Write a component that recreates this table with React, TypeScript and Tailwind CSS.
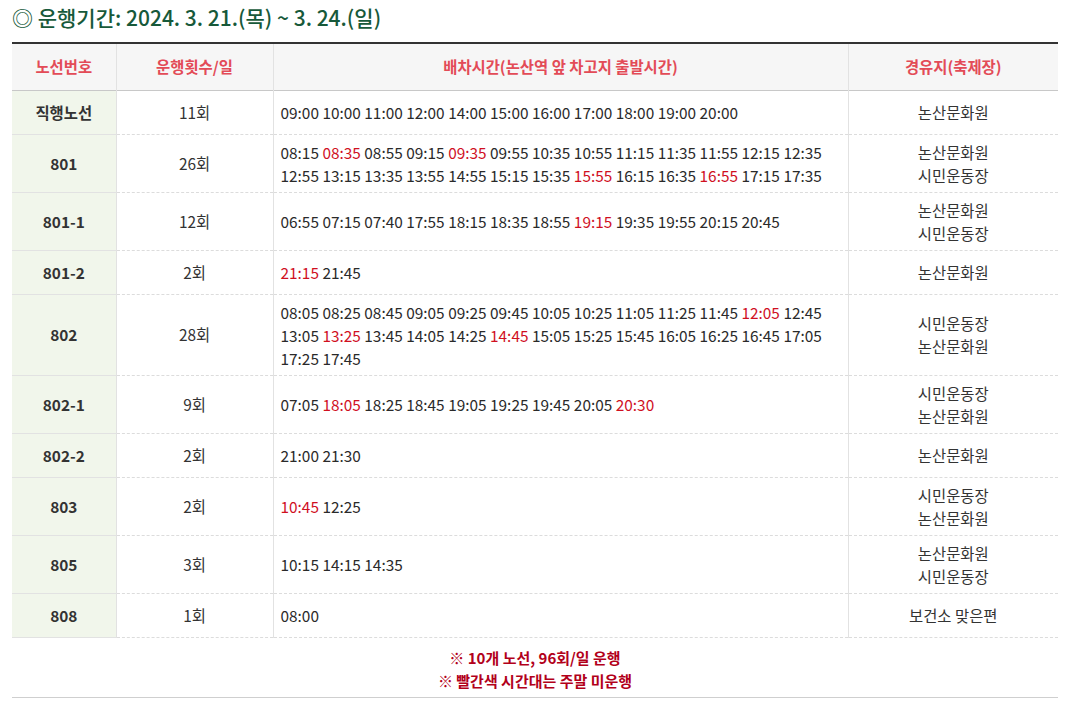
import React from 'react';

type Route = {
    no: string;
    count: string;
    lines: string[][];
    stops: string[];
};

// times prefixed with * are weekday-only (red)
const routes: Route[] = [
    {
        no: '직행노선',
        count: '11회',
        lines: [['09:00', '10:00', '11:00', '12:00', '14:00', '15:00', '16:00', '17:00', '18:00', '19:00', '20:00']],
        stops: ['논산문화원'],
    },
    {
        no: '801',
        count: '26회',
        lines: [
            ['08:15', '*08:35', '08:55', '09:15', '*09:35', '09:55', '10:35', '10:55', '11:15', '11:35', '11:55', '12:15', '12:35'],
            ['12:55', '13:15', '13:35', '13:55', '14:55', '15:15', '15:35', '*15:55', '16:15', '16:35', '*16:55', '17:15', '17:35'],
        ],
        stops: ['논산문화원', '시민운동장'],
    },
    {
        no: '801-1',
        count: '12회',
        lines: [['06:55', '07:15', '07:40', '17:55', '18:15', '18:35', '18:55', '*19:15', '19:35', '19:55', '20:15', '20:45']],
        stops: ['논산문화원', '시민운동장'],
    },
    {
        no: '801-2',
        count: '2회',
        lines: [['*21:15', '21:45']],
        stops: ['논산문화원'],
    },
    {
        no: '802',
        count: '28회',
        lines: [
            ['08:05', '08:25', '08:45', '09:05', '09:25', '09:45', '10:05', '10:25', '11:05', '11:25', '11:45', '*12:05', '12:45'],
            ['13:05', '*13:25', '13:45', '14:05', '14:25', '*14:45', '15:05', '15:25', '15:45', '16:05', '16:25', '16:45', '17:05'],
            ['17:25', '17:45'],
        ],
        stops: ['시민운동장', '논산문화원'],
    },
    {
        no: '802-1',
        count: '9회',
        lines: [['07:05', '*18:05', '18:25', '18:45', '19:05', '19:25', '19:45', '20:05', '*20:30']],
        stops: ['시민운동장', '논산문화원'],
    },
    {
        no: '802-2',
        count: '2회',
        lines: [['21:00', '21:30']],
        stops: ['논산문화원'],
    },
    {
        no: '803',
        count: '2회',
        lines: [['*10:45', '12:25']],
        stops: ['시민운동장', '논산문화원'],
    },
    {
        no: '805',
        count: '3회',
        lines: [['10:15', '14:15', '14:35']],
        stops: ['논산문화원', '시민운동장'],
    },
    {
        no: '808',
        count: '1회',
        lines: [['08:00']],
        stops: ['보건소 맞은편'],
    },
];

const font = { fontFamily: '"Noto Sans CJK KR", "Noto Sans", sans-serif' };

export default function App() {
    return (
        <div className="bg-white w-[1073px] h-[714px] px-[12px] pt-[3px] text-[#333]" style={font}>
            {/* Title */}
            <h2 className="text-[21px] leading-[28px] font-medium text-[#17593a]">
                ◎ 운행기간: 2024. 3. 21.(목) ~ 3. 24.(일)
            </h2>

            <table className="mt-[11px] w-[1046px] border-collapse border-t-2 border-[#333] text-[15.4px] table-fixed">
                <colgroup>
                    <col className="w-[104px]" />
                    <col className="w-[157px]" />
                    <col className="w-[575px]" />
                    <col className="w-[210px]" />
                </colgroup>
                <thead>
                    <tr className="bg-[#f6f6f6] border-b border-[#c8c8c8]">
                        <th className="h-[47px] font-bold text-[#e34b57] border-r border-[#e2e2e2]">노선번호</th>
                        <th className="font-bold text-[#e34b57] border-r border-[#e2e2e2]">운행횟수/일</th>
                        <th className="font-bold text-[#e34b57] border-r border-[#e2e2e2]">배차시간(논산역 앞 차고지 출발시간)</th>
                        <th className="font-bold text-[#e34b57]">경유지(축제장)</th>
                    </tr>
                </thead>
                <tbody>
                    {routes.map((r) => (
                        <tr key={r.no}>
                            <td className="h-[44px] bg-[#f1f6eb] border-b border-r border-[#e2e2e2] text-center font-bold text-[#333] leading-[23px]">
                                {r.no}
                            </td>
                            <td className="border-b border-[#dcdcdc] [border-bottom-style:dashed] border-r border-r-[#e2e2e2] text-center leading-[23px] text-[#333]">
                                {r.count}
                            </td>
                            <td className="border-b border-[#dcdcdc] [border-bottom-style:dashed] border-r border-r-[#e2e2e2] pl-[7px] pt-[6px] pb-[5px] leading-[23px] text-[#2a2a2a] whitespace-nowrap">
                                {r.lines.map((line, i) => (
                                    <div key={i}>
                                        {line.map((t, j) => {
                                            const red = t.startsWith('*');
                                            return (
                                                <React.Fragment key={j}>
                                                    {j > 0 && ' '}
                                                    <span className={red ? 'text-[#d0101f]' : ''}>{red ? t.slice(1) : t}</span>
                                                </React.Fragment>
                                            );
                                        })}
                                    </div>
                                ))}
                            </td>
                            <td className="border-b border-[#dcdcdc] [border-bottom-style:dashed] pt-[6px] pb-[5px] text-center leading-[23px] text-[#333]">
                                {r.stops.map((s) => (
                                    <div key={s}>{s}</div>
                                ))}
                            </td>
                        </tr>
                    ))}
                </tbody>
            </table>

            {/* Notes */}
            <div className="w-[1046px] border-b border-[#cfcfcf] pt-[8px] pb-[5px] text-center text-[15px] leading-[23px] font-bold text-[#b2001a]">
                <p>※ 10개 노선, 96회/일 운행</p>
                <p>※ 빨간색 시간대는 주말 미운행</p>
            </div>
        </div>
    );
}
